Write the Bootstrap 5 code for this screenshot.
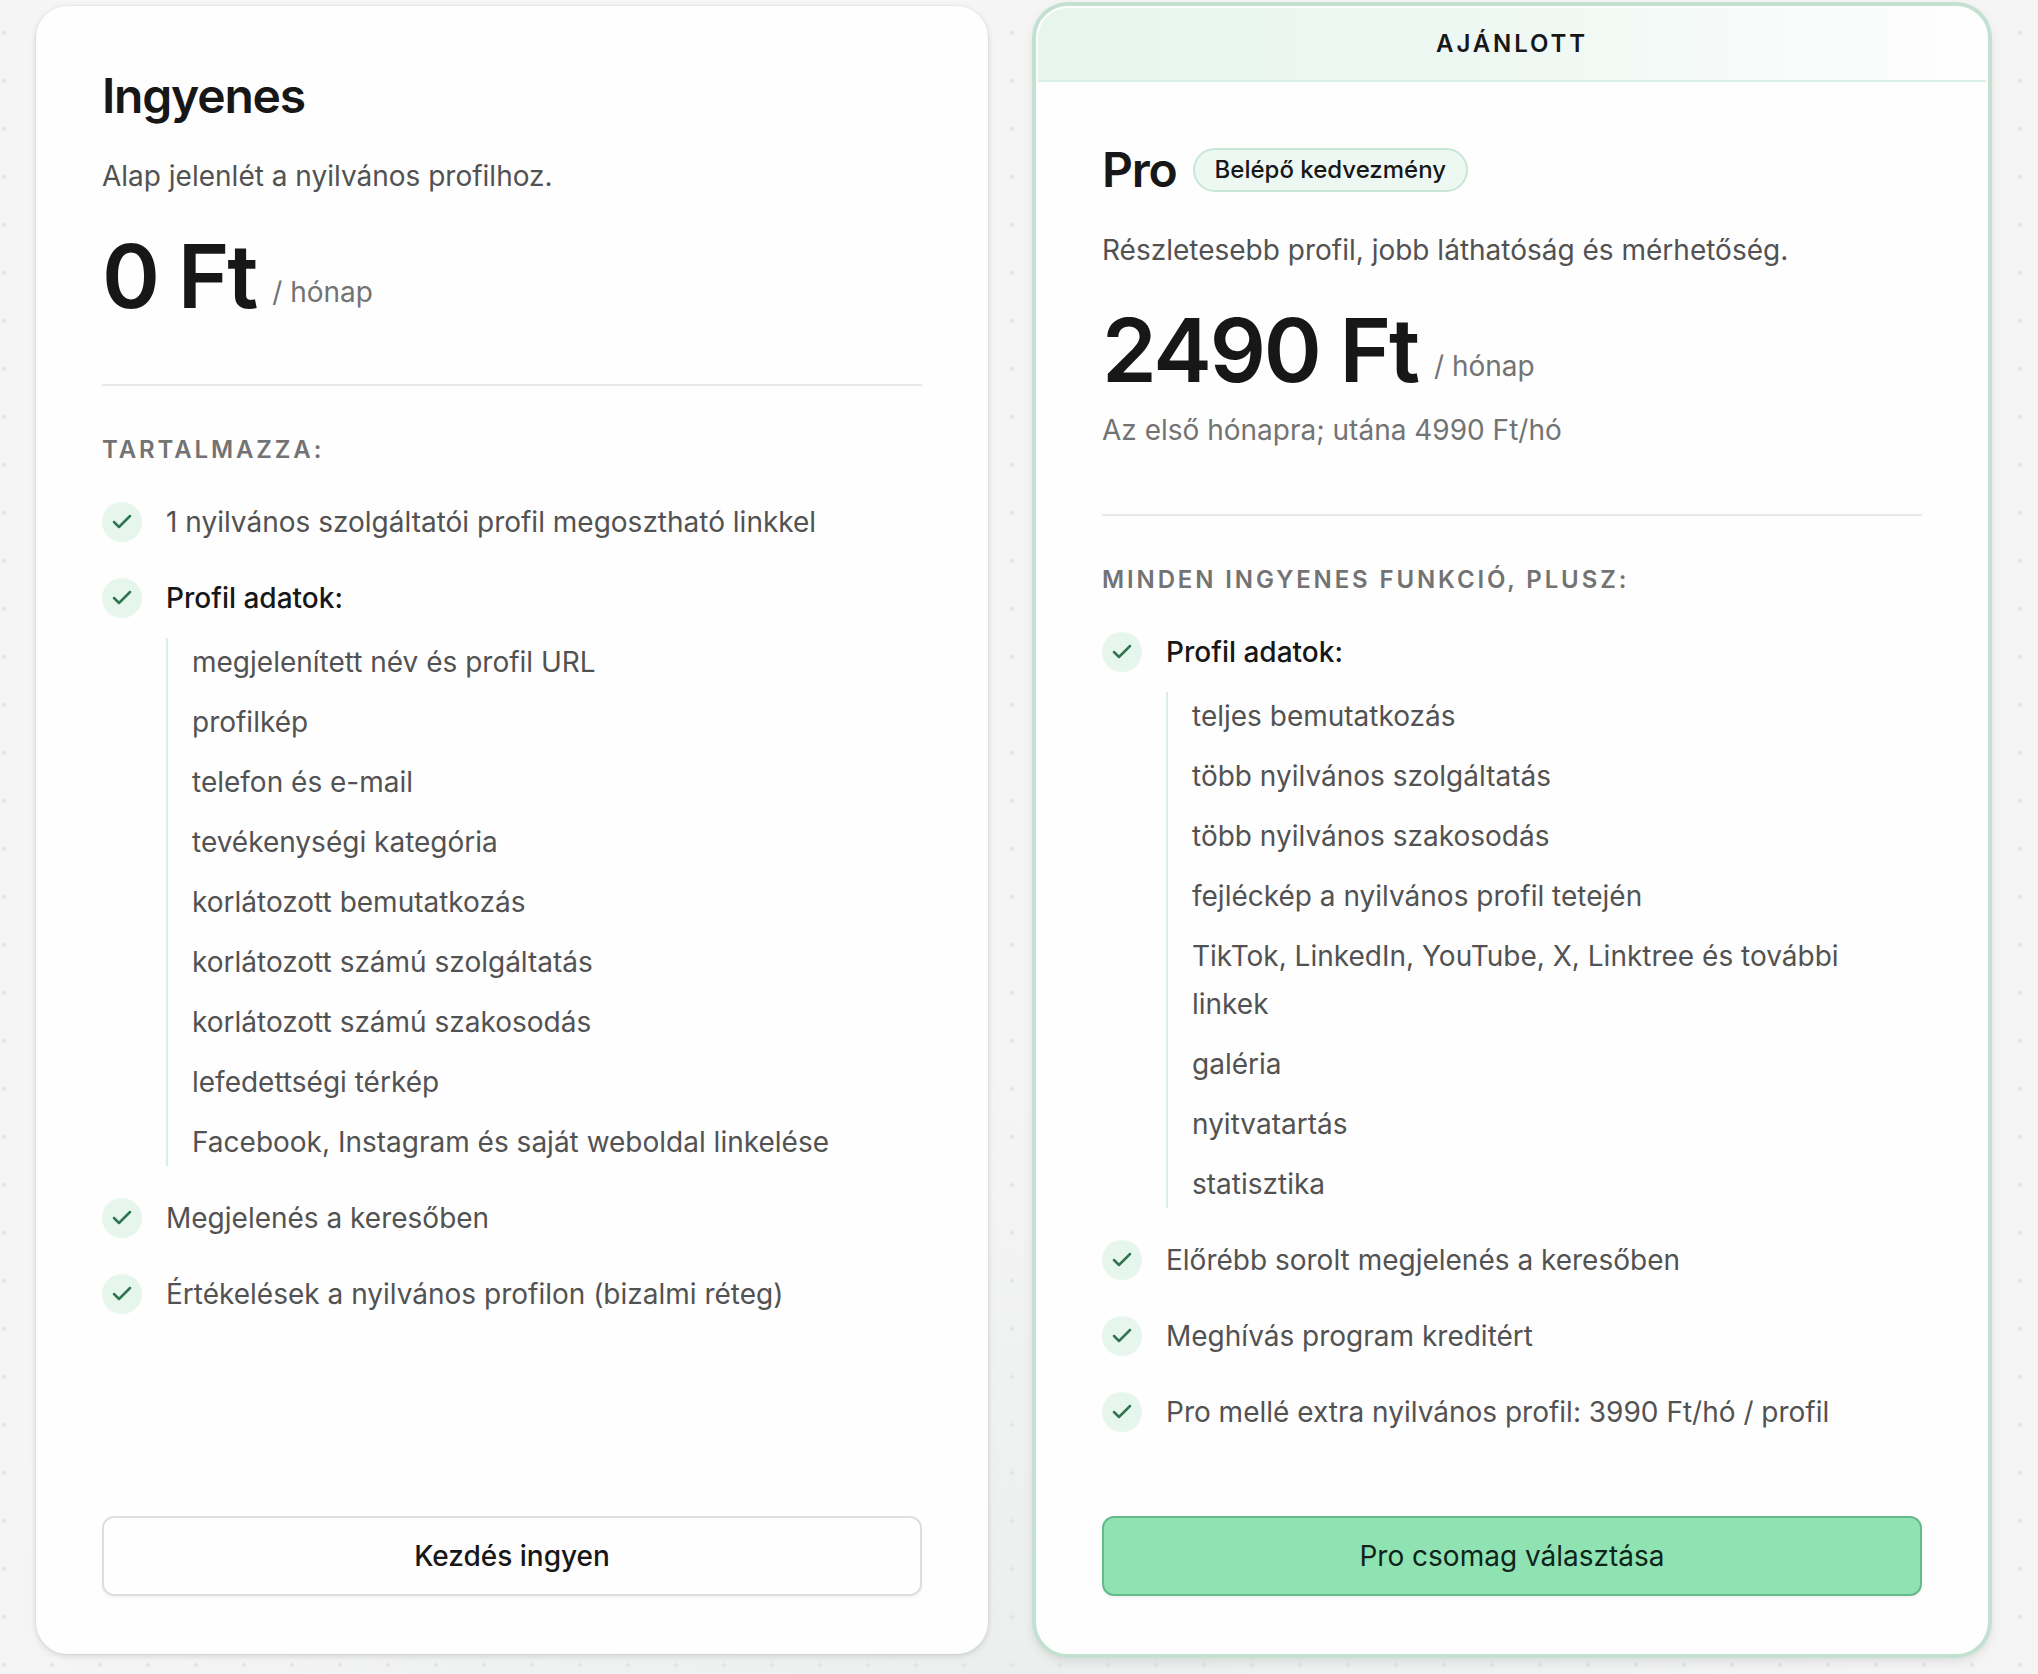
<!DOCTYPE html>
<html lang="hu">
<head>
<meta charset="utf-8">
<meta name="viewport" content="width=device-width, initial-scale=1">
<title>Csomagok</title>
<link href="https://cdn.jsdelivr.net/npm/bootstrap@5.3.0/dist/css/bootstrap.min.css" rel="stylesheet">
<style>
  body {
    font-family: Inter, "Liberation Sans", sans-serif;
    font-size: 28px;
    line-height: 48px;
    color: #525252;
    background-color: #f5f5f5;
    background-image:
      radial-gradient(circle at 4px 33px, #e2e5e3 0, #e2e5e3 1px, transparent 3px),
      radial-gradient(ellipse 1060px 620px at 50% 100%, #ebefed, transparent);
    background-size: 48px 48px, 100% 100%;
  }
  .plans { padding: 6px 50px 20px 36px; }
  .plans .row { --bs-gutter-x: 48px; --bs-gutter-y: 48px; }
  .plan {
    border: 2px solid #fefefe;
    border-radius: 32px;
    background: #fefefe;
    box-shadow: 0 0 0 1px rgba(0, 0, 0, .02), 0 2px 6px rgba(0, 0, 0, .14);
  }
  .plan-pro { box-shadow: 0 0 0 4px #c3e1d1, 0 4px 12px 2px rgba(0, 0, 0, .12); }
  .plan-ribbon {
    padding: 20px;
    border-bottom: 2px solid #daf0e4;
    border-radius: 30px 30px 0 0;
    background: linear-gradient(90deg, #e6f6ec, #eff8f3 50%, #fefefe);
    color: #171717;
    font-size: 24px;
    line-height: 32px;
    letter-spacing: .12em;
  }
  .plan-body { padding: 64px 64px 56px; }
  .plan-name { font-size: 48px; line-height: 48px; letter-spacing: -.025em; color: #171717; }
  .plan-offer {
    padding: 4px 20px;
    border: 2px solid #c8e6d6;
    background: #eef8f3;
    color: #171717;
    font-size: 24px;
    line-height: 32px;
  }
  .plan-intro { margin: 32px 0; }
  .plan-price { font-size: 88px; line-height: 88px; letter-spacing: -.025em; color: #171717; }
  .plan-period, .plan-note { line-height: 40px; color: #737373; }
  .plan-period { padding-bottom: 8px; }
  .plan-rule { margin: 64px 0 48px; border-top: 2px solid #e8e8e8; opacity: 1; }
  .plan-label {
    margin-bottom: 32px;
    font-size: 24px;
    line-height: 32px;
    letter-spacing: .12em;
    color: #737373;
  }
  .feature-list { gap: 28px; margin-bottom: 80px; }
  .feature-list > li { gap: 24px; }
  .feature-title { color: #171717; }
  .feature-tick { width: 40px; height: 40px; margin-top: 4px; background: #e7f6ed; color: #2f7650; }
  .feature-sub { gap: 12px; margin-top: 16px; padding-left: 24px; border-left: 2px solid #d9efe4; }
  .plan-btn {
    height: 80px;
    border: 2px solid #dddfde;
    border-radius: 12px;
    font-size: 28px;
    color: #171717;
    box-shadow: 0 2px 3px rgba(0, 0, 0, .05);
  }
  .plan-btn-pro { border-color: #66b98a; background: #8fe3b3; color: #10241a; }
</style>
</head>
<body>
<svg class="d-none" xmlns="http://www.w3.org/2000/svg">
  <symbol id="tick" viewBox="0 0 24 24">
    <path d="M20 6 9 17l-5-5" fill="none" stroke="currentColor" stroke-width="2.5" stroke-linecap="round" stroke-linejoin="round"/>
  </symbol>
</svg>
<main class="plans">
  <div class="row row-cols-1 row-cols-lg-2">
    <div class="col">
      <section class="plan h-100 d-flex flex-column">
        <div class="plan-body flex-grow-1 d-flex flex-column">
          <h2 class="plan-name fw-semibold mb-0">Ingyenes</h2>
          <p class="plan-intro">Alap jelenlét a nyilvános profilhoz.</p>
          <div class="d-flex align-items-end gap-3">
            <span class="plan-price fw-semibold">0 Ft</span>
            <span class="plan-period">/ hónap</span>
          </div>
          <hr class="plan-rule">
          <h3 class="plan-label fw-semibold">TARTALMAZZA:</h3>
          <ul class="feature-list list-unstyled d-flex flex-column">
            <li class="d-flex"><span class="feature-tick rounded-circle flex-shrink-0 d-flex align-items-center justify-content-center"><svg width="24" height="24" aria-hidden="true"><use href="#tick"/></svg></span><span>1 nyilvános szolgáltatói profil megosztható linkkel</span></li>
            <li class="d-flex"><span class="feature-tick rounded-circle flex-shrink-0 d-flex align-items-center justify-content-center"><svg width="24" height="24" aria-hidden="true"><use href="#tick"/></svg></span>
              <div>
                <div class="feature-title fw-medium">Profil adatok:</div>
                <ul class="feature-sub list-unstyled d-flex flex-column">
                  <li>megjelenített név és profil URL</li>
                  <li>profilkép</li>
                  <li>telefon és e-mail</li>
                  <li>tevékenységi kategória</li>
                  <li>korlátozott bemutatkozás</li>
                  <li>korlátozott számú szolgáltatás</li>
                  <li>korlátozott számú szakosodás</li>
                  <li>lefedettségi térkép</li>
                  <li>Facebook, Instagram és saját weboldal linkelése</li>
                </ul>
              </div>
            </li>
            <li class="d-flex"><span class="feature-tick rounded-circle flex-shrink-0 d-flex align-items-center justify-content-center"><svg width="24" height="24" aria-hidden="true"><use href="#tick"/></svg></span><span>Megjelenés a keresőben</span></li>
            <li class="d-flex"><span class="feature-tick rounded-circle flex-shrink-0 d-flex align-items-center justify-content-center"><svg width="24" height="24" aria-hidden="true"><use href="#tick"/></svg></span><span>Értékelések a nyilvános profilon (bizalmi réteg)</span></li>
          </ul>
          <button type="button" class="plan-btn btn fw-medium w-100 mt-auto">Kezdés ingyen</button>
        </div>
      </section>
    </div>
    <div class="col">
      <section class="plan plan-pro h-100 d-flex flex-column">
        <div class="plan-ribbon text-center fw-semibold">AJÁNLOTT</div>
        <div class="plan-body flex-grow-1 d-flex flex-column">
          <div class="d-flex align-items-center gap-3">
            <h2 class="plan-name fw-semibold mb-0">Pro</h2>
            <span class="plan-offer rounded-pill fw-medium">Belépő kedvezmény</span>
          </div>
          <p class="plan-intro">Részletesebb profil, jobb láthatóság és mérhetőség.</p>
          <div class="d-flex align-items-end gap-3">
            <span class="plan-price fw-semibold">2490 Ft</span>
            <span class="plan-period">/ hónap</span>
          </div>
          <p class="plan-note mt-3 mb-0">Az első hónapra; utána 4990 Ft/hó</p>
          <hr class="plan-rule">
          <h3 class="plan-label fw-semibold">MINDEN INGYENES FUNKCIÓ, PLUSZ:</h3>
          <ul class="feature-list list-unstyled d-flex flex-column">
            <li class="d-flex"><span class="feature-tick rounded-circle flex-shrink-0 d-flex align-items-center justify-content-center"><svg width="24" height="24" aria-hidden="true"><use href="#tick"/></svg></span>
              <div>
                <div class="feature-title fw-medium">Profil adatok:</div>
                <ul class="feature-sub list-unstyled d-flex flex-column">
                  <li>teljes bemutatkozás</li>
                  <li>több nyilvános szolgáltatás</li>
                  <li>több nyilvános szakosodás</li>
                  <li>fejléckép a nyilvános profil tetején</li>
                  <li>TikTok, LinkedIn, YouTube, X, Linktree és további linkek</li>
                  <li>galéria</li>
                  <li>nyitvatartás</li>
                  <li>statisztika</li>
                </ul>
              </div>
            </li>
            <li class="d-flex"><span class="feature-tick rounded-circle flex-shrink-0 d-flex align-items-center justify-content-center"><svg width="24" height="24" aria-hidden="true"><use href="#tick"/></svg></span><span>Előrébb sorolt megjelenés a keresőben</span></li>
            <li class="d-flex"><span class="feature-tick rounded-circle flex-shrink-0 d-flex align-items-center justify-content-center"><svg width="24" height="24" aria-hidden="true"><use href="#tick"/></svg></span><span>Meghívás program kreditért</span></li>
            <li class="d-flex"><span class="feature-tick rounded-circle flex-shrink-0 d-flex align-items-center justify-content-center"><svg width="24" height="24" aria-hidden="true"><use href="#tick"/></svg></span><span>Pro mellé extra nyilvános profil: 3990 Ft/hó / profil</span></li>
          </ul>
          <button type="button" class="plan-btn plan-btn-pro btn w-100 mt-auto">Pro csomag választása</button>
        </div>
      </section>
    </div>
  </div>
</main>
<script src="https://cdn.jsdelivr.net/npm/bootstrap@5.3.0/dist/js/bootstrap.bundle.min.js"></script>
</body>
</html>
